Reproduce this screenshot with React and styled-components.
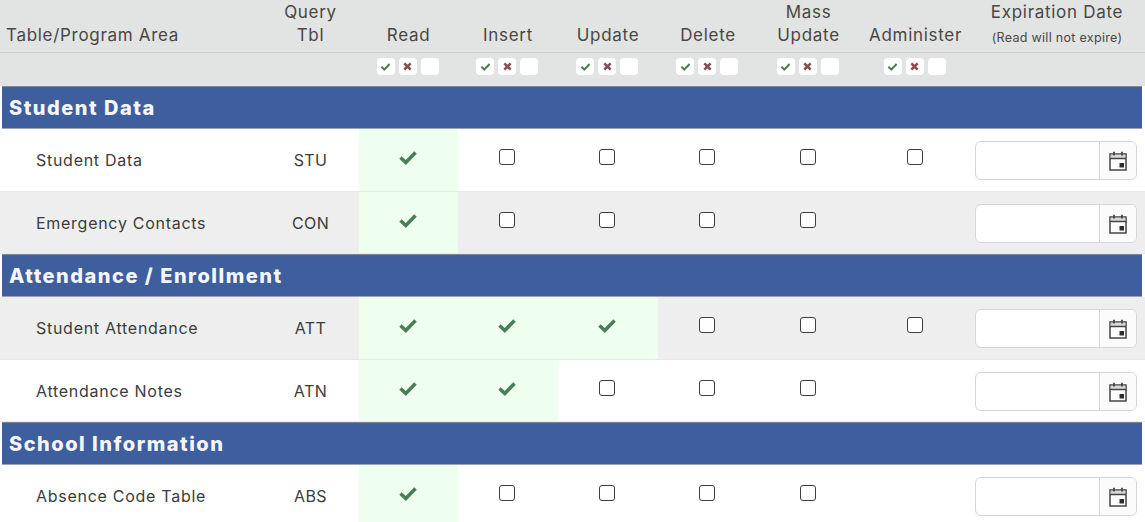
import React from 'react'
import styled, { createGlobalStyle } from 'styled-components'

const GlobalStyle = createGlobalStyle`
  html, body {
    margin: 0;
    padding: 0;
    background: #fff;
    overflow: hidden;
  }
  body {
    font-family: 'Inter', 'Liberation Sans', sans-serif;
    color: #3f3f3f;
  }
`

const COLUMNS = '260px 97px 99px 100px 100px 100px 101px 113px 170px'

const Page = styled.div`
  width: 1145px;
  height: 522px;
  overflow: hidden;
`

const HeaderRow = styled.div`
  display: grid;
  grid-template-columns: ${COLUMNS};
  height: 53px;
  padding: 0 3px 0 2px;
  background: #e2e4e3;
  border-bottom: 1px solid #c9cbca;
  box-sizing: border-box;
`

const HeaderCell = styled.div`
  display: flex;
  flex-direction: column;
  justify-content: flex-end;
  align-items: ${({ $left }) => ($left ? 'flex-start' : 'center')};
  padding: 0 0 5px ${({ $left }) => ($left ? '4px' : '0')};
  font-size: 17px;
  font-weight: 400;
  line-height: 23px;
  color: #4a4644;
  letter-spacing: 0.7px;
  white-space: nowrap;
`

const HeaderNote = styled.span`
  font-size: 12.5px;
  line-height: 23px;
  letter-spacing: 0.3px;
  transform: translateY(2px);
`

const BulkRow = styled.div`
  display: grid;
  grid-template-columns: ${COLUMNS};
  height: 33px;
  padding: 0 3px 0 2px;
  background: #e2e4e3;
  box-sizing: border-box;
`

const BulkCell = styled.div`
  display: flex;
  justify-content: center;
  gap: 4px;
  padding-top: 5px;
  margin-left: -2px;
`

const BulkButton = styled.span`
  width: 18px;
  height: 17px;
  background: #fff;
  border-radius: 4px;
  display: flex;
  align-items: center;
  justify-content: center;
`

const SectionBar = styled.div`
  height: 43px;
  margin: 0 3px 0 2px;
  padding-left: 7px;
  display: flex;
  align-items: center;
  background: #3e5e9e;
  border-top: 1px solid #7f8999;
  border-bottom: 1px solid #9ba3b0;
  box-sizing: border-box;
  color: #f4f6fa;
  font-size: 20px;
  font-weight: 800;
  letter-spacing: 1.5px;
`

const NameCell = styled.div`
  display: flex;
  align-items: center;
  padding: 0 0 0 34px;
  font-size: 16px;
  font-weight: 400;
  color: #3c3c3c;
  letter-spacing: 0.72px;
  white-space: nowrap;
`

const CodeCell = styled(NameCell)`
  justify-content: center;
  padding-left: 0;
  letter-spacing: 0.4px;
`

const DataRow = styled.div`
  display: grid;
  grid-template-columns: ${COLUMNS};
  height: 63px;
  padding: 0 3px 0 2px;
  background: ${({ $shaded }) => ($shaded ? '#eeeeee' : '#fff')};
  border-bottom: 1px solid #e8e8e8;
  box-sizing: border-box;
  & + & {
    height: 62px;
  }
  & + & ${NameCell} {
    padding-top: 1px;
  }
`

const PermCell = styled.div`
  display: flex;
  align-items: center;
  justify-content: center;
  padding: 0 2px 6px 0;
  background: ${({ $on }) => ($on ? '#efffef' : 'transparent')};
`

const Box = styled.span`
  width: 16px;
  height: 16px;
  border: 1.6px solid #3d3d3d;
  border-radius: 3px;
  background: #fff;
  box-sizing: border-box;
`

const DateCell = styled.div`
  display: flex;
  align-items: flex-start;
  padding: 12px 5px 0 3px;
`

const DateField = styled.div`
  flex: 1;
  height: 39px;
  display: flex;
  background: #fff;
  border: 1px solid #d6d6d6;
  border-radius: 6px;
  box-sizing: border-box;
  overflow: hidden;
`

const DateInput = styled.div`
  flex: 1;
`

const DateButton = styled.div`
  width: 36px;
  display: flex;
  align-items: center;
  justify-content: center;
  background: #fbfbfb;
  border-left: 1px solid #d6d6d6;
`

const Check = ({ size = 20, color = '#4b7d57' }) => (
  <svg width={size} height={size} viewBox="0 0 20 20">
    <path d="M2.5 10.5 L7.8 15.5 L17.5 5.5" fill="none" stroke={color} strokeWidth="3.6" />
  </svg>
)

const Cross = () => (
  <svg width="9" height="9" viewBox="0 0 10 10">
    <path d="M1.5 1.5 L8.5 8.5 M8.5 1.5 L1.5 8.5" fill="none" stroke="#8a4a55" strokeWidth="2.8" />
  </svg>
)

const CalendarIcon = () => (
  <svg width="20" height="22" viewBox="0 0 20 22">
    <rect x="2" y="4" width="16" height="16" fill="#fff" stroke="#444" strokeWidth="1.5" />
    <rect x="2.7" y="4.7" width="14.6" height="3.6" fill="#d8d8d8" />
    <path d="M2 8.5 H18" stroke="#444" strokeWidth="1.5" />
    <path d="M6 1.8 V5.5 M14 1.8 V5.5" stroke="#444" strokeWidth="1.8" />
    <rect x="11.5" y="13" width="4.5" height="4.5" fill="#2e2e2e" />
  </svg>
)

const BulkSet = () => (
  <BulkCell>
    <BulkButton><Check size={11} /></BulkButton>
    <BulkButton><Cross /></BulkButton>
    <BulkButton />
  </BulkCell>
)

const SECTIONS = [
  {
    title: 'Student Data',
    rows: [
      { name: 'Student Data', code: 'STU', granted: 1, admin: true },
      { name: 'Emergency Contacts', code: 'CON', granted: 1, shaded: true },
    ],
  },
  {
    title: 'Attendance / Enrollment',
    rows: [
      { name: 'Student Attendance', code: 'ATT', granted: 3, admin: true, shaded: true },
      { name: 'Attendance Notes', code: 'ATN', granted: 2 },
    ],
  },
  {
    title: 'School Information',
    rows: [{ name: 'Absence Code Table', code: 'ABS', granted: 1 }],
  },
]

const PERMS = [0, 1, 2, 3, 4]

export default function App() {
  return (
    <Page>
      <GlobalStyle />
      <HeaderRow>
        <HeaderCell $left>Table/Program Area</HeaderCell>
        <HeaderCell><span>Query</span><span>Tbl</span></HeaderCell>
        <HeaderCell>Read</HeaderCell>
        <HeaderCell>Insert</HeaderCell>
        <HeaderCell>Update</HeaderCell>
        <HeaderCell>Delete</HeaderCell>
        <HeaderCell><span>Mass</span><span>Update</span></HeaderCell>
        <HeaderCell>Administer</HeaderCell>
        <HeaderCell>
          <span>Expiration Date</span>
          <HeaderNote>(Read will not expire)</HeaderNote>
        </HeaderCell>
      </HeaderRow>
      <BulkRow>
        <div />
        <div />
        <BulkSet />
        <BulkSet />
        <BulkSet />
        <BulkSet />
        <BulkSet />
        <BulkSet />
      </BulkRow>
      {SECTIONS.map((section) => (
        <React.Fragment key={section.title}>
          <SectionBar>{section.title}</SectionBar>
          {section.rows.map((row) => (
            <DataRow key={row.code} $shaded={row.shaded}>
              <NameCell>{row.name}</NameCell>
              <CodeCell>{row.code}</CodeCell>
              {PERMS.map((i) => (
                <PermCell key={i} $on={i < row.granted}>
                  {i < row.granted ? <Check /> : <Box />}
                </PermCell>
              ))}
              <PermCell>{row.admin && <Box />}</PermCell>
              <DateCell>
                <DateField>
                  <DateInput />
                  <DateButton><CalendarIcon /></DateButton>
                </DateField>
              </DateCell>
            </DataRow>
          ))}
        </React.Fragment>
      ))}
    </Page>
  )
}
